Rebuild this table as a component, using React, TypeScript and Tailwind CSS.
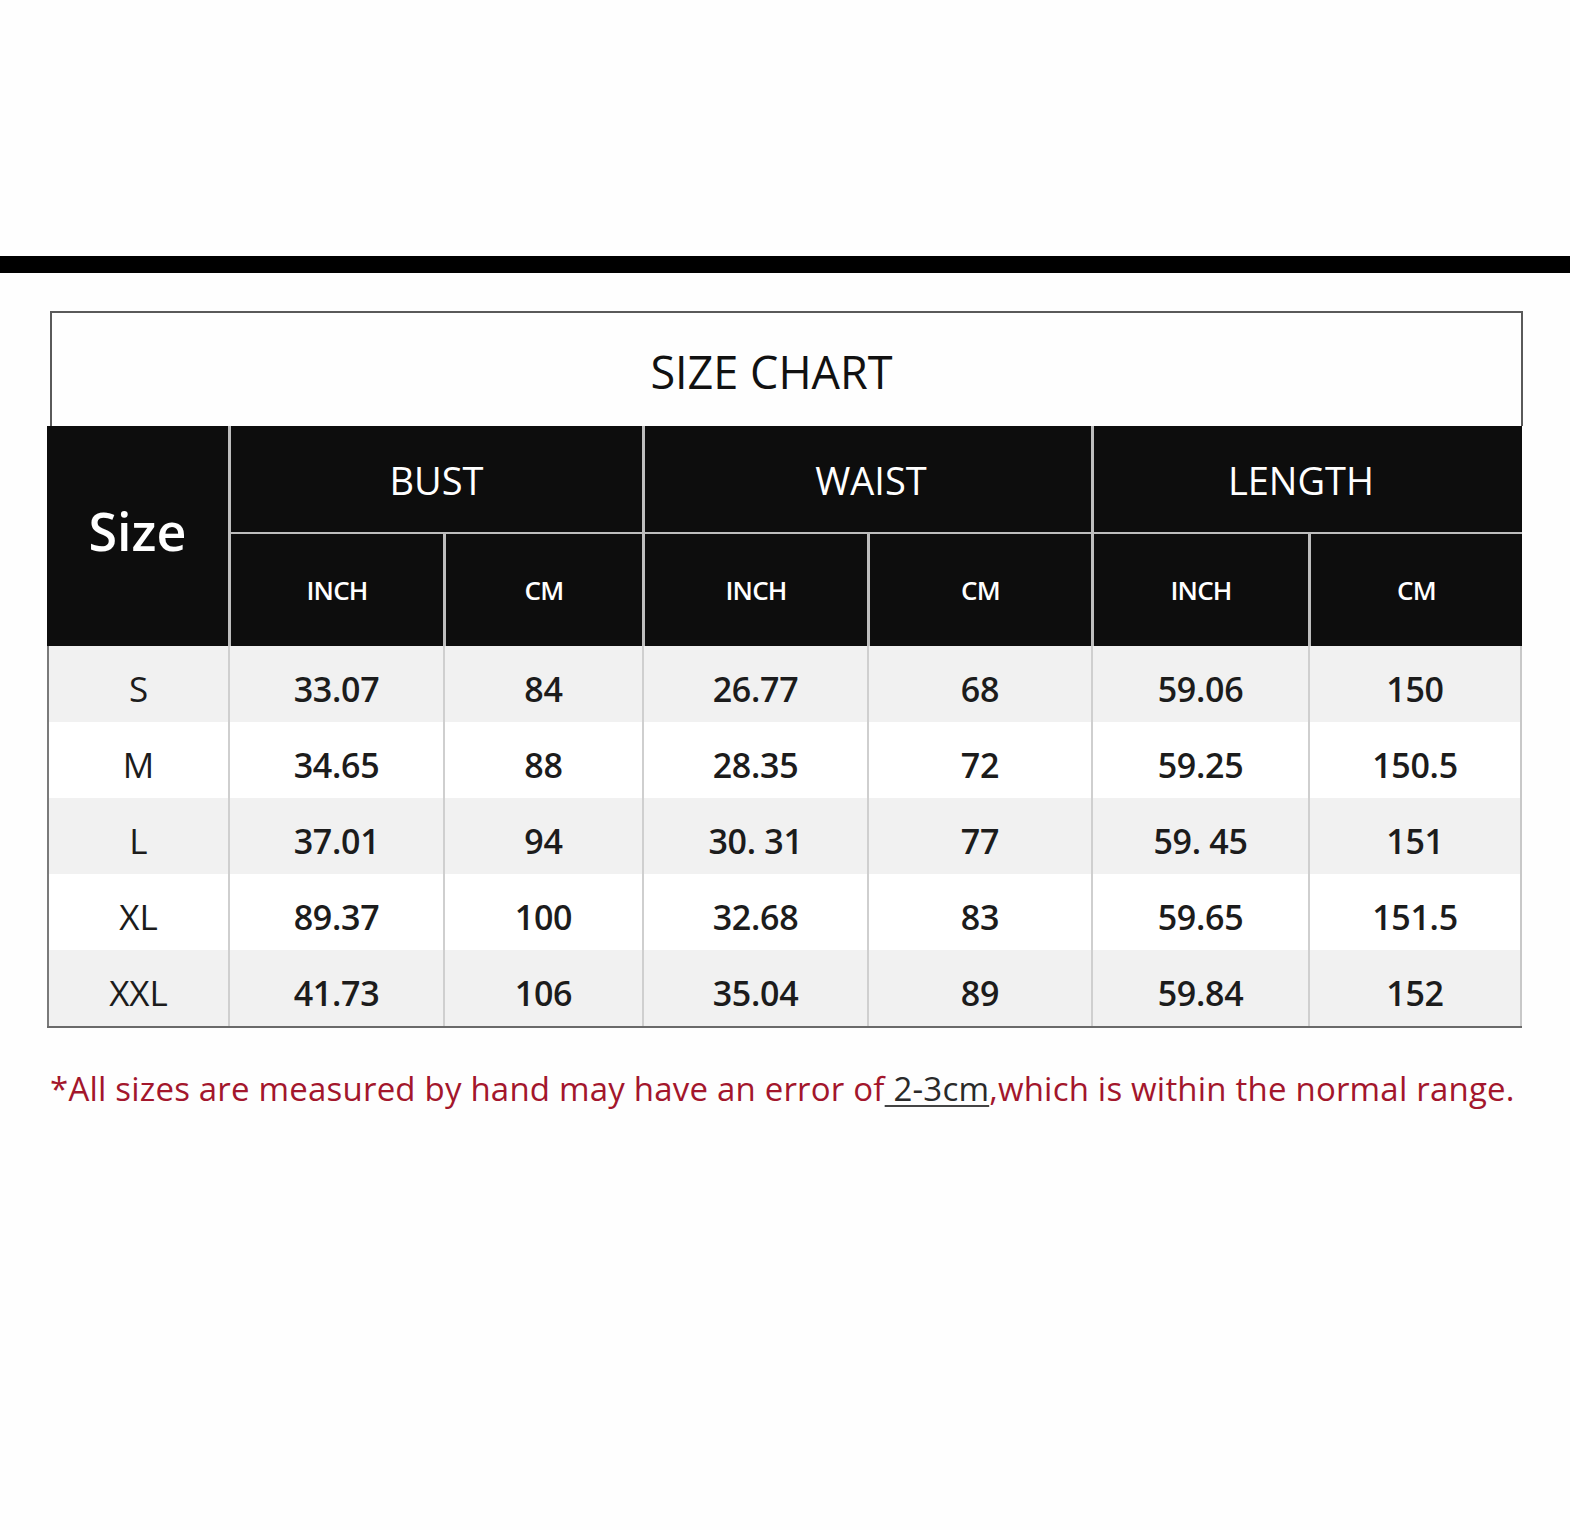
import React from "react";

const rows = [
  ["S", "33.07", "84", "26.77", "68", "59.06", "150"],
  ["M", "34.65", "88", "28.35", "72", "59.25", "150.5"],
  ["L", "37.01", "94", "30. 31", "77", "59. 45", "151"],
  ["XL", "89.37", "100", "32.68", "83", "59.65", "151.5"],
  ["XXL", "41.73", "106", "35.04", "89", "59.84", "152"],
];

const font = { fontFamily: '"Open Sans", "Noto Sans", sans-serif' };

export default function App() {
  return (
    <div className="w-[1570px] h-[1530px] bg-[#fefefe] pt-[256px]" style={font}>
      <div className="h-[17px] bg-black" />
      <div className="ml-[47px] mt-[38px] w-[1475px]">
        <div className="ml-[3px] w-[1473px] h-[115px] border-2 border-b-0 border-[#5a5a5a] flex items-center justify-center pt-[4px] pr-[30px]">
          <span className="text-[45px] text-[#111]">SIZE CHART</span>
        </div>
        <div className="grid grid-cols-[181px_215px_199px_225px_224px_217px_214px] grid-rows-[106px_114px] bg-[#0d0d0d] text-white">
          <div className="row-span-2 flex items-center justify-center pb-[10px]">
            <span className="text-[52px] font-semibold">Size</span>
          </div>
          {["BUST", "WAIST", "LENGTH"].map((g, i) => (
            <div
              key={g}
              className={`col-span-2 border-l-[3px] border-[#bdbdbd] flex items-center justify-center pt-[2px] ${
                i === 1 ? "pl-[6px]" : i === 2 ? "pr-[14px]" : ""
              }`}
            >
              <span className="text-[38px]">{g}</span>
            </div>
          ))}
          {["INCH", "CM", "INCH", "CM", "INCH", "CM"].map((s, i) => (
            <div
              key={i}
              className="border-l-[3px] border-t-[2px] border-[#bdbdbd] flex items-center justify-center"
            >
              <span className="text-[26px] font-semibold tracking-[-0.8px]">{s}</span>
            </div>
          ))}
        </div>
        <div className="border-b-2 border-[#6a6a6a]">
          {rows.map((r, ri) => (
            <div
              key={ri}
              className={`grid grid-cols-[181px_215px_199px_225px_224px_217px_214px] h-[76px] ${
                ri % 2 === 0 ? "bg-[#f1f1f1]" : "bg-white"
              }`}
            >
              {r.map((c, ci) => (
                <div
                  key={ci}
                  className={`flex items-center justify-center pt-[10px] border-l-2 ${
                    ci === 0 ? "border-[#7a7a7a]" : "border-[#cfcfcf]"
                  } ${ci === 6 ? "border-r-2 border-r-[#c8c8c8]" : ""}`}
                >
                  <span
                    className={`text-[34px] text-[#1c1c1c] ${
                      ci === 0 ? "font-normal text-[35px]" : "font-semibold tracking-[-0.3px]"
                    }`}
                  >
                    {c}
                  </span>
                </div>
              ))}
            </div>
          ))}
        </div>
      </div>
      <div className="mt-[39px] ml-[50px] text-[33px] leading-[44px] tracking-[0.2px] text-[#a3162c] whitespace-nowrap">
        *All sizes are measured by hand may have an error of
        <span className="text-[#2a2a2a] underline decoration-[#444] decoration-2 underline-offset-4">{"\u00a02-3cm"}</span>
        ,which is within the normal range.
      </div>
    </div>
  );
}
